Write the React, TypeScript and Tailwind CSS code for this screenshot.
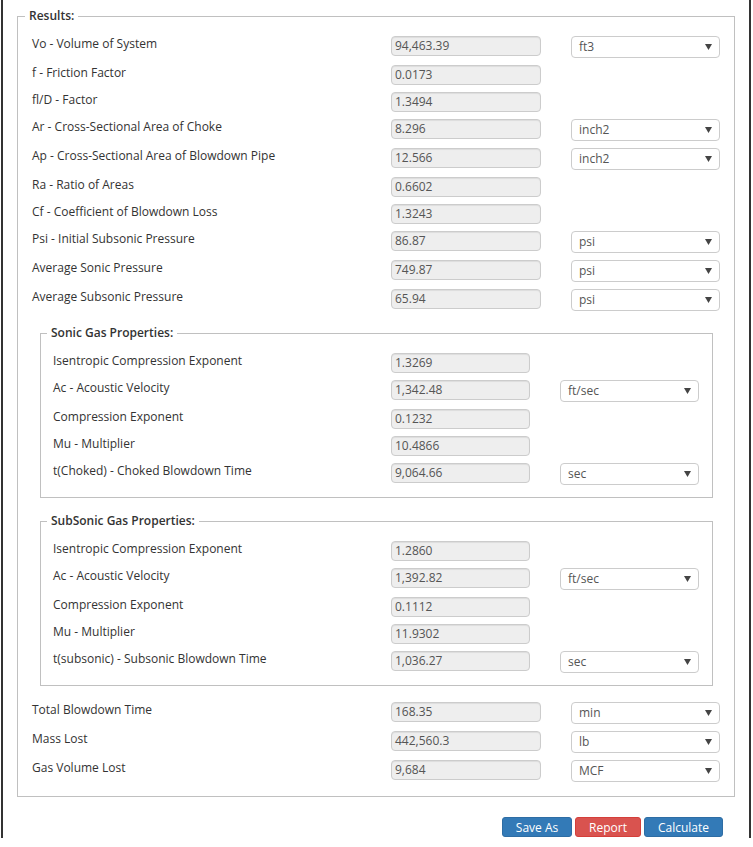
import React from "react";

type V = { label: string; input: string; select: string };
const MAIN: V = { label: "w-[359px]", input: "w-[150px]", select: "w-[149px]" };
const SUB: V = { label: "w-[338px]", input: "w-[139px]", select: "w-[139px]" };

type R = [string, string, string?];

function Arrow() {
  return (
    <svg width="7" height="6" viewBox="0 0 7 6" className="shrink-0">
      <polygon points="0,0 7,0 3.5,6" fill="#444" />
    </svg>
  );
}

function Row({ r, v }: { r: R; v: V }) {
  const [label, value, unit] = r;
  return (
    <div className={`flex items-start ${unit ? "h-[29px]" : "h-[27px]"}`}>
      <div className={`${v.label} shrink-0 text-[12px] leading-[16px] text-[#333]`}>{label}</div>
      <div
        className={`${v.input} shrink-0 h-[20px] border border-[#ccc] rounded-[4px] bg-[#eee] pl-[3px] text-[12px] leading-[16px] pt-px text-[#555] shadow-[inset_0_1px_1px_rgba(0,0,0,0.075)]`}
      >
        {value}
      </div>
      {unit && (
        <div
          className={`${v.select} shrink-0 ml-[30px] h-[22px] border border-[#ccc] rounded-[4px] bg-white pl-[7px] pr-[7px] pb-[1px] flex items-center justify-between text-[12px] leading-[16px] text-[#555]`}
        >
          <span>{unit}</span>
          <span className="pt-[1px]">
            <Arrow />
          </span>
        </div>
      )}
    </div>
  );
}

const results1: R[] = [
  ["Vo - Volume of System", "94,463.39", "ft3"],
  ["f - Friction Factor", "0.0173"],
  ["fl/D - Factor", "1.3494"],
  ["Ar - Cross-Sectional Area of Choke", "8.296", "inch2"],
  ["Ap - Cross-Sectional Area of Blowdown Pipe", "12.566", "inch2"],
  ["Ra - Ratio of Areas", "0.6602"],
  ["Cf - Coefficient of Blowdown Loss", "1.3243"],
  ["Psi - Initial Subsonic Pressure", "86.87", "psi"],
  ["Average Sonic Pressure", "749.87", "psi"],
  ["Average Subsonic Pressure", "65.94", "psi"],
];

const sonic: R[] = [
  ["Isentropic Compression Exponent", "1.3269"],
  ["Ac - Acoustic Velocity", "1,342.48", "ft/sec"],
  ["Compression Exponent", "0.1232"],
  ["Mu - Multiplier", "10.4866"],
  ["t(Choked) - Choked Blowdown Time", "9,064.66", "sec"],
];

const subsonic: R[] = [
  ["Isentropic Compression Exponent", "1.2860"],
  ["Ac - Acoustic Velocity", "1,392.82", "ft/sec"],
  ["Compression Exponent", "0.1112"],
  ["Mu - Multiplier", "11.9302"],
  ["t(subsonic) - Subsonic Blowdown Time", "1,036.27", "sec"],
];

const results2: R[] = [
  ["Total Blowdown Time", "168.35", "min"],
  ["Mass Lost", "442,560.3", "lb"],
  ["Gas Volume Lost", "9,684", "MCF"],
];

function SubSet({ title, rows, first }: { title: string; rows: R[]; first?: boolean }) {
  return (
    <fieldset
      className={`${first ? "mt-[5px]" : "mt-[13px]"} ml-[8px] mr-[7px] border border-[#c0c0c0] pl-[12px] pr-[13px] pt-[10px] pb-[5px]`}
    >
      <legend className="-ml-[6px] px-[4px] text-[12px] leading-[20px] font-semibold text-[#333]">{title}</legend>
      {rows.map((r, i) => (
        <Row key={i} r={r} v={SUB} />
      ))}
    </fieldset>
  );
}

export default function App() {
  return (
    <div className="w-[753px] h-[847px] bg-white overflow-hidden font-['Open_Sans',sans-serif]">
      <div className="ml-[1px] w-[750px] h-[838px] border-x-2 border-[#333] pt-[6px] pl-[14px] pr-[14px]">
        <fieldset className="border border-[#c0c0c0] pl-[14px] pr-[14px] pt-[10px] pb-[7px]">
          <legend className="-ml-[7px] px-[4px] text-[12px] leading-[20px] font-semibold text-[#333]">Results:</legend>
          {results1.map((r, i) => (
            <Row key={i} r={r} v={MAIN} />
          ))}
          <SubSet title="Sonic Gas Properties:" rows={sonic} first />
          <SubSet title="SubSonic Gas Properties:" rows={subsonic} />
          <div className="mt-[16px]">
            {results2.map((r, i) => (
              <Row key={i} r={r} v={MAIN} />
            ))}
          </div>
        </fieldset>
        <div className="mt-[20px] mr-[12px] flex justify-end gap-[3px] text-[12px] text-white">
          <button className="w-[70px] h-[20px] rounded-[3px] bg-[#337ab7] border border-[#2e6da4] leading-[19px]">Save As</button>
          <button className="w-[66px] h-[20px] rounded-[3px] bg-[#d9534f] border border-[#d43f3a] leading-[19px]">Report</button>
          <button className="w-[79px] h-[20px] rounded-[3px] bg-[#337ab7] border border-[#2e6da4] leading-[19px]">Calculate</button>
        </div>
      </div>
    </div>
  );
}
